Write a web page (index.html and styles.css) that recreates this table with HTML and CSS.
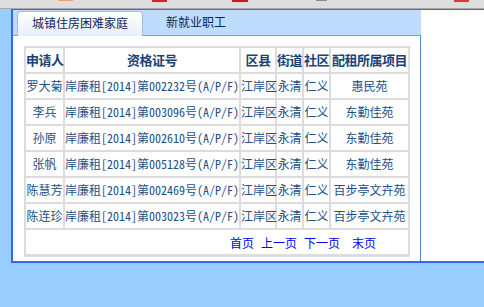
FILE: index.html
```html
<!DOCTYPE html>
<html lang="zh-CN">
<head>
<meta charset="utf-8">
<title>住房保障公示</title>
<link rel="stylesheet" href="styles.css">
</head>
<body>
<div class="topbar">
  <span class="chip chip-orange"></span>
  <span class="chip chip-red1"></span>
  <span class="chip chip-red2"></span>
  <span class="chip chip-grey"></span>
  <span class="chip chip-red3"></span>
</div>
<div class="frame">
  <div class="panel">
    <div class="tabbar">
      <div class="tab active">城镇住房困难家庭</div>
      <div class="tab">新就业职工</div>
    </div>
    <div class="content">
      <table class="grid">
        <colgroup>
          <col class="c1"><col class="c2"><col class="c3"><col class="c4"><col class="c5"><col class="c6">
        </colgroup>
        <thead>
          <tr><th>申请人</th><th>资格证号</th><th>区县</th><th>街道</th><th>社区</th><th>配租所属项目</th></tr>
        </thead>
        <tbody>
          <tr><td>罗大菊</td><td class="cert">岸廉租[2014]第002232号(A/P/F)</td><td>江岸区</td><td>永清</td><td>仁义</td><td>惠民苑</td></tr>
          <tr><td>李兵</td><td class="cert">岸廉租[2014]第003096号(A/P/F)</td><td>江岸区</td><td>永清</td><td>仁义</td><td>东勤佳苑</td></tr>
          <tr><td>孙原</td><td class="cert">岸廉租[2014]第002610号(A/P/F)</td><td>江岸区</td><td>永清</td><td>仁义</td><td>东勤佳苑</td></tr>
          <tr><td>张帆</td><td class="cert">岸廉租[2014]第005128号(A/P/F)</td><td>江岸区</td><td>永清</td><td>仁义</td><td>东勤佳苑</td></tr>
          <tr><td>陈慧芳</td><td class="cert">岸廉租[2014]第002469号(A/P/F)</td><td>江岸区</td><td>永清</td><td>仁义</td><td>百步亭文卉苑</td></tr>
          <tr><td>陈连珍</td><td class="cert">岸廉租[2014]第003023号(A/P/F)</td><td>江岸区</td><td>永清</td><td>仁义</td><td>百步亭文卉苑</td></tr>
        </tbody>
      </table>
      <div class="pager">
        <a class="pg" href="#">首页</a>
        <a class="pg" href="#">上一页</a>
        <a class="pg" href="#">下一页</a>
        <a class="pg last" href="#">末页</a>
      </div>
    </div>
  </div>
</div>
</body>
</html>
```
FILE: styles.css
```css
html, body {
  margin: 0;
  padding: 0;
}
body {
  background: #99ccff;
  font-family: "Noto Sans CJK SC", "Noto Sans", sans-serif;
  font-size: 12px;
  height: 307px;
  overflow: hidden;
}
.topbar {
  height: 8px;
  background: #dedede;
  border-bottom: 1px solid #a8a8a8;
  display: flex;
  align-items: flex-start;
}
.chip {
  display: block;
  height: 2px;
}
.chip-orange { margin-left: 58px; width: 15px; height: 1px; background: #f4a060; }
.chip-red1 { margin-left: 79px; width: 15px; background: #e02020; }
.chip-red2 { margin-left: 65px; width: 16px; background: #d01818; }
.chip-grey { margin-left: 68px; width: 11px; height: 1px; background: #8a8a8a; }
.chip-red3 { margin-left: 127px; width: 15px; background: #e03838; }

.frame {
  margin-left: 11px;
  height: 251px;
  background: #ffffff;
  border-left: 2px solid #3366ff;
  border-top: 1px solid #3a6cf0;
  border-bottom: 2px solid #3366ff;
}
.panel {
  width: 408px;
  height: 251px;
  display: flex;
  flex-direction: column;
}
.tabbar {
  height: 25px;
  background: #bedcfc;
  display: flex;
  align-items: flex-end;
  padding-left: 4px;
}
.tab {
  height: 24px;
  line-height: 22px;
  color: #0c1f5e;
  font-size: 12px;
  box-sizing: border-box;
}
.tab.active {
  width: 126px;
  text-align: center;
  background: linear-gradient(#ffffff, #e6eef8);
  border: 1px solid #a9bcd6;
  border-bottom: none;
  border-radius: 4px 4px 0 0;
  margin-bottom: -1px;
  height: 25px;
  position: relative;
  z-index: 1;
}
.tab:not(.active) {
  margin-left: 23px;
}
.content {
  flex: 1;
  background: #ffffff;
  border-top: 1px solid #6fa0e0;
  border-right: 1px solid #4a86d0;
  padding: 10px 0 0 11px;
}
.grid {
  border-collapse: separate;
  border-spacing: 0;
  border: 1px solid #dcdcdc;
  table-layout: fixed;
  width: 386px;
  color: #214f88;
}
.c1 { width: 39px; }
.c2 { width: 176px; }
.c3 { width: 36px; }
.c4 { width: 27px; }
.c5 { width: 27px; }
.c6 { width: 79px; }
.grid th, .grid td {
  border: 1px solid #dcdcdc;
  padding: 0;
  height: 24px;
  white-space: nowrap;
  overflow: visible;
  text-align: center;
  font-weight: normal;
  line-height: 24px;
}
.grid th {
  font-weight: bold;
  font-size: 13px;
  color: #1b4276;
  letter-spacing: -0.5px;
}
.grid td.cert {
  text-align: left;
  font-family: "Noto Sans Mono CJK SC", "Noto Sans CJK SC", monospace;
}
.pager {
  width: 386px;
  box-sizing: border-box;
  height: 27px;
  border: 2px solid #dcdcdc;
  border-top: none;
  border-bottom: 3px solid #dcdcdc;
  display: flex;
  justify-content: flex-end;
  align-items: center;
  padding-right: 32px;
}
.pg {
  color: #0000ff;
  text-decoration: none;
  margin-left: 7px;
}
.pg.last {
  margin-left: 12px;
}
```
